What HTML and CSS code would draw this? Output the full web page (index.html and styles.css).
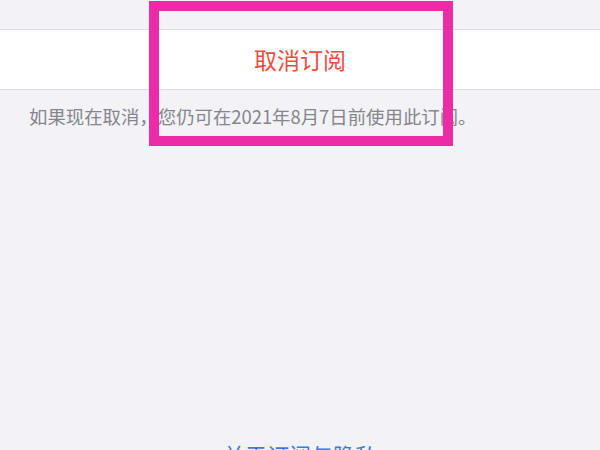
FILE: index.html
```html
<!DOCTYPE html>
<html lang="zh-CN">
<head>
<meta charset="utf-8">
<title>取消订阅</title>
<link rel="stylesheet" href="styles.css">
</head>
<body>
<div class="page">
  <div class="spacer"></div>
  <div class="cell">
    <span class="cancel">取消订阅</span>
  </div>
  <p class="note">如果现在取消，您仍可在2021年8月7日前使用此订阅。</p>
  <div class="footer">
    <span class="link">关于订阅与隐私</span>
  </div>
  <div class="highlight"></div>
</div>
</body>
</html>
```

FILE: styles.css
```css
html, body {
  margin: 0;
  padding: 0;
  background: #f2f2f7;
}
body {
  font-family: "Noto Sans CJK SC", "Noto Sans", sans-serif;
}
.page {
  position: relative;
  width: 600px;
  height: 450px;
  overflow: hidden;
  background: #f2f2f7;
}
.spacer {
  height: 29px;
}
.cell {
  height: 59px;
  background: #ffffff;
  border-top: 1px solid #dcdce0;
  border-bottom: 1px solid #dcdce0;
  display: flex;
  align-items: center;
  justify-content: center;
}
.cancel {
  color: #f04b3e;
  font-size: 23px;
  line-height: 1;
}
.note {
  margin: 0;
  padding: 13px 0 0 29px;
  font-size: 18.4px;
  line-height: 26px;
  color: #86868b;
  white-space: nowrap;
}
.footer {
  margin-top: 314px;
  display: flex;
  justify-content: center;
}
.link {
  color: #2f7df6;
  font-size: 22px;
  line-height: 1;
}
.highlight {
  position: absolute;
  left: 149px;
  top: 1px;
  width: 284px;
  height: 125px;
  border: 10.5px solid #ee2ba6;
}
```
